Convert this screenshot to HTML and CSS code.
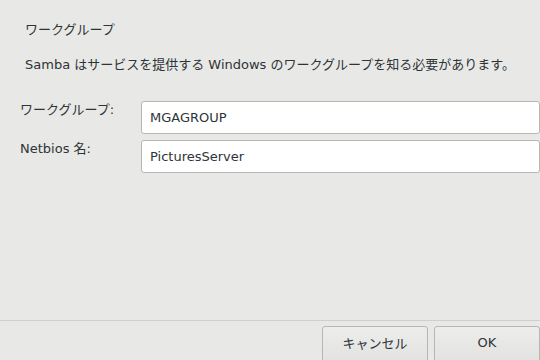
FILE: index.html
```html
<!DOCTYPE html>
<html lang="ja">
<head>
  <meta charset="UTF-8" />
  <title>ワークグループ</title>
  <link rel="stylesheet" href="styles.css">
</head>
<body>

  <!-- Main content -->
  <div class="content">
    <div class="title">ワークグループ</div>
    <p class="desc">Samba はサービスを提供する Windows のワークグループを知る必要があります。</p>

    <div class="form">
      <label for="workgroup">ワークグループ:</label>
      <input id="workgroup" type="text" value="MGAGROUP">
      <label for="netbios">Netbios 名:</label>
      <input id="netbios" type="text" value="PicturesServer">
    </div>
  </div>

  <!-- Buttons -->
  <div class="actions">
    <button class="btn">キャンセル</button>
    <button class="btn">OK</button>
  </div>

</body>
</html>
```

FILE: styles.css
```css
html, body {
  height: 100%;
}

body {
  margin: 0;
  background: #e8e8e7;
  color: #2e3436;
  font-family: "DejaVu Sans", "Noto Sans CJK JP", sans-serif;
  font-size: 13px;
  display: flex;
  flex-direction: column;
  overflow: hidden;
}

.content {
  flex: 1;
  padding: 21px 0 0 0;
}

.title {
  margin-left: 25px;
  line-height: 18px;
}

.desc {
  margin: 17px 0 0 25px;
  line-height: 18px;
}

.form {
  display: grid;
  grid-template-columns: 121px 1fr;
  row-gap: 6px;
  margin: 27px 0 0 20px;
}

.form label {
  line-height: 18px;
}

.form input {
  box-sizing: border-box;
  height: 33px;
  padding: 0 8px;
  border: 1px solid #b6b6b3;
  border-radius: 3px;
  background: #fff;
  color: #2e3436;
  font-family: inherit;
  font-size: 13px;
  outline: none;
}

.actions {
  border-top: 1px solid #cfcfcd;
  display: flex;
  justify-content: flex-end;
  gap: 6px;
  padding-top: 5px;
  height: 34px;
}

.btn {
  box-sizing: border-box;
  width: 106px;
  height: 42px;
  padding: 0 0 10px 0;
  border: 1px solid #b6b6b3;
  border-radius: 3px;
  background: linear-gradient(#ededec, #e0e0df);
  color: #2e3436;
  font-family: inherit;
  font-size: 13px;
}
```
